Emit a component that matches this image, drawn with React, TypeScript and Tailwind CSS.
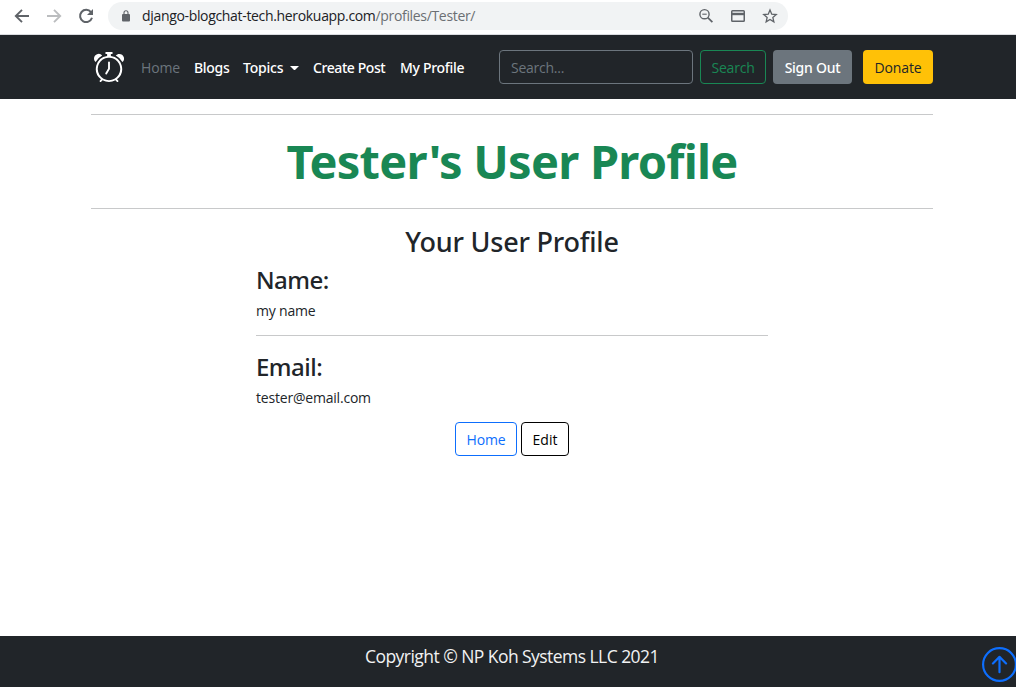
import React from "react";

const sans = "font-['Open_Sans','Noto_Sans',sans-serif]";
const medium = "font-['Noto_Sans','Open_Sans',sans-serif] font-medium";

function BrowserBar() {
  return (
    <div className="flex h-[35px] shrink-0 items-start border-b border-[#dadce0] bg-white pt-0.5 text-[#5f6368]">
      <div className="flex h-7 w-[108px] items-center gap-4 pl-3.5">
        <svg className="h-4 w-4 shrink-0" viewBox="0 0 16 16" fill="none" stroke="currentColor" strokeWidth="1.9">
          <path d="M15 8H2M8 1.8 1.8 8 8 14.2" />
        </svg>
        <svg className="h-4 w-4 shrink-0 text-[#bbbdbf]" viewBox="0 0 16 16" fill="none" stroke="currentColor" strokeWidth="1.9">
          <path d="M1 8h13M8 1.8 14.2 8 8 14.2" />
        </svg>
        <svg className="h-4 w-4 shrink-0" viewBox="0 0 16 16" fill="none" stroke="currentColor" strokeWidth="2">
          <path d="M13 4.2A6.1 6.1 0 1 0 14 9.8" />
          <path d="M15 1v6H9z" fill="currentColor" stroke="none" />
        </svg>
      </div>
      <div className="flex h-7 w-[680px] items-center rounded-full bg-[#f1f3f4] pl-3.5 pr-2.5">
        <svg className="-mt-px h-3 w-2 shrink-0" viewBox="0 0 8 12">
          <rect x="0" y="4" width="8" height="7.5" rx="1" fill="currentColor" />
          <path d="M2 4.5V2.8a2 2 0 0 1 4 0v1.7" fill="none" stroke="currentColor" strokeWidth="1.1" />
        </svg>
        <span className="ml-3 whitespace-nowrap text-[14px] leading-5 tracking-[-0.33px] text-[#202124]">
          django-blogchat-tech.herokuapp.com<span className="text-[#6b6f73]">/profiles/Tester/</span>
        </span>
        <div className="ml-auto flex items-center gap-4">
          <svg className="h-4 w-4" viewBox="0 0 16 16" fill="none" stroke="currentColor" strokeWidth="1.4">
            <circle cx="6.5" cy="6.2" r="4.6" />
            <path d="M4.3 6.2h4.4" strokeWidth="1.1" />
            <path d="m9.8 9.6 4.6 4.6" strokeWidth="1.7" />
          </svg>
          <svg className="h-4 w-4" viewBox="0 0 16 16" fill="none" stroke="currentColor" strokeWidth="1.5">
            <rect x="1.75" y="2.75" width="12.5" height="10.5" rx="0.8" />
            <path d="M1.5 6h13" strokeWidth="2.4" />
          </svg>
          <svg className="h-4 w-4" viewBox="0 0 16 16" fill="none" stroke="currentColor" strokeWidth="1.3">
            <path d="m8 2 1.75 4.15 4.5.4-3.4 2.95 1 4.4L8 11.55 4.15 13.9l1-4.4-3.4-2.95 4.5-.4z" />
          </svg>
        </div>
      </div>
    </div>
  );
}

function AlarmClock() {
  return (
    <svg className="h-[30px] w-[30px] shrink-0" viewBox="0 0 16 16" fill="#fff">
      <path d="M8.5 5.5a.5.5 0 0 0-1 0v3.362l-1.429 2.38a.5.5 0 1 0 .858.515l1.5-2.5A.5.5 0 0 0 8.5 9V5.5z" />
      <path d="M6.5 0a.5.5 0 0 0 0 1H7v1.07a7.001 7.001 0 0 0-3.273 12.474l-.602.602a.5.5 0 0 0 .707.708l.746-.746A6.97 6.97 0 0 0 8 16a6.97 6.97 0 0 0 3.422-.892l.746.746a.5.5 0 0 0 .707-.708l-.601-.602A7.001 7.001 0 0 0 9 2.07V1h.5a.5.5 0 0 0 0-1h-3zm1.038 3.018a6.093 6.093 0 0 1 .924 0 6 6 0 1 1-.924 0zM0 3.5c0 .753.333 1.429.86 1.887A8.035 8.035 0 0 1 4.387 1.86 2.5 2.5 0 0 0 0 3.5zM13.5 1c-.753 0-1.429.333-1.887.86a8.035 8.035 0 0 1 3.527 3.527A2.5 2.5 0 0 0 13.5 1z" />
    </svg>
  );
}

function Navbar() {
  return (
    <nav className="flex h-16 shrink-0 items-center whitespace-nowrap bg-[#212529] pl-[94px] text-[14px] leading-[21px] text-white">
      <AlarmClock />
      <a className="ml-[17px] w-[53px] pt-px tracking-[-0.15px] text-[#6c757d]">Home</a>
      <a className={`w-[49px] pt-px tracking-[-0.3px] ${medium}`}>Blogs</a>
      <a className={`flex w-[70px] items-center pt-px tracking-[-0.2px] ${medium}`}>
        Topics
        <svg className="ml-[7px] h-1 w-[9px]" viewBox="0 0 9 4" fill="#fff">
          <path d="M0 0h9L4.5 4.5z" />
        </svg>
      </a>
      <a className={`w-[87px] pt-px tracking-[-0.42px] ${medium}`}>Create Post</a>
      <a className={`w-[99px] pt-px tracking-[-0.3px] ${medium}`}>My Profile</a>
      <input
        type="text"
        placeholder="Search..."
        className="h-[34px] w-[194px] rounded border border-[#6c757d] bg-transparent px-[11px] pt-px tracking-[-0.25px] outline-none placeholder:text-[#6c757d]"
      />
      <button className="ml-[7px] h-[34px] w-[66px] rounded border border-[#198754] pt-px tracking-[-0.2px] text-[#198754]">Search</button>
      <button className={`ml-[7px] h-[34px] w-[79px] rounded bg-[#6c757d] pt-px tracking-[-0.25px] ${medium}`}>Sign Out</button>
      <button className="ml-[11px] h-[34px] w-[70px] rounded bg-[#ffc107] pt-px tracking-[-0.1px] text-[#212529]">Donate</button>
    </nav>
  );
}

function Field({ label, value }: { label: string; value: string }) {
  return (
    <div>
      <h3 className={`h-[30px] pt-px text-[24px] leading-[30px] tracking-[-0.5px] ${medium}`}>{label}</h3>
      <p className="mt-[6px] h-[21px] text-[14px] leading-[21px] tracking-[-0.2px]">{value}</p>
    </div>
  );
}

export default function App() {
  return (
    <div className={`flex h-[687px] w-[1016px] flex-col overflow-hidden bg-white text-[#212529] ${sans}`}>
      <BrowserBar />
      <Navbar />
      <main className="ml-[91px] flex w-[842px] grow flex-col pt-[15px]">
        <hr className="border-[#c8c9ca]" />
        <h1 className="h-[93px] pt-[17px] text-center font-['Noto_Sans','Open_Sans',sans-serif] text-[47px] font-bold leading-[58px] tracking-[-0.76px] text-[#198754]">
          Tester's User Profile
        </h1>
        <hr className="border-[#c8c9ca]" />
        <h2 className={`mt-4 h-[33px] text-center text-[27px] leading-[34px] tracking-[-0.2px] ${medium}`}>Your User Profile</h2>
        <div className="mx-auto mt-[6px] w-[512px]">
          <Field label="Name:" value="my name" />
          <hr className="mb-[15px] mt-[14px] border-[#c8c9ca]" />
          <Field label="Email:" value="tester@email.com" />
          <div className="mt-[14px] flex justify-center gap-1 text-[14px] leading-[21px]">
            <button className="h-[34px] w-[62px] rounded border border-[#0d6efd] pt-px tracking-[-0.1px] text-[#0d6efd]">Home</button>
            <button className="h-[34px] w-12 rounded border border-black pt-px text-black">Edit</button>
          </div>
        </div>
      </main>
      <footer className="relative h-[51px] shrink-0 bg-[#212529] pl-2 pt-2 text-center text-[17.5px] leading-[25px] tracking-[-0.55px] text-[#f1f2f3]">
        Copyright © NP Koh Systems LLC 2021
        <svg className="absolute right-[-1px] top-[11px] h-[35px] w-[35px]" viewBox="0 0 16 16" fill="#0d6efd">
          <path d="M1 8a7 7 0 1 0 14 0A7 7 0 0 0 1 8zm15 0A8 8 0 1 1 0 8a8 8 0 0 1 16 0zm-7.5 3.5a.5.5 0 0 1-1 0V5.707L5.354 7.854a.5.5 0 1 1-.708-.708l3-3a.5.5 0 0 1 .708 0l3 3a.5.5 0 0 1-.708.708L8.5 5.707V11.5z" />
        </svg>
      </footer>
    </div>
  );
}
